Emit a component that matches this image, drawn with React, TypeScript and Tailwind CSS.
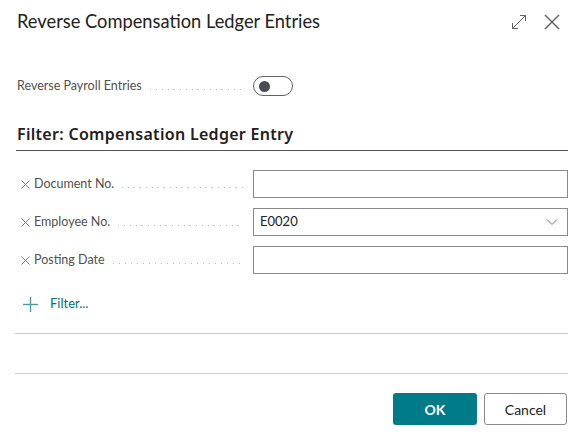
import React, { useState } from 'react'

const font = { fontFamily: '"Segoe UI", Lato, "Noto Sans", sans-serif' }
const headingFont = { fontFamily: '"Segoe UI", "Noto Sans", sans-serif' }

function Dots() {
  return (
    <div className="flex-1 ml-[8px] mr-[10px] h-[1px] translate-y-[3px] bg-repeat-x bg-[length:6px_1px] bg-[linear-gradient(to_right,#bdbdbd_1px,transparent_1px)]" />
  )
}

function ClearIcon() {
  return (
    <svg width="9" height="9" viewBox="0 0 9 9" fill="none" stroke="#707070" strokeWidth="0.9" className="ml-[4px] mr-[4px]">
      <path d="M0.5 0.5 L8.5 8.5" />
      <path d="M8.5 0.5 L0.5 8.5" />
    </svg>
  )
}

interface FilterRowProps {
  label: string
  value?: string
  dropdown?: boolean
}

function FilterRow({ label, value, dropdown }: FilterRowProps) {
  return (
    <div className="flex items-center h-[28px]">
      <div className="flex items-center w-[236px] text-[12.5px] text-[#505050]">
        <ClearIcon />
        <span className="whitespace-nowrap">{label}</span>
        <Dots />
      </div>
      <div className="flex-1 h-[28px] border border-[#8a8a8a] flex items-center pl-[6px] pr-[8px] text-[13px] text-[#212121]">
        <span className="flex-1">{value}</span>
        {dropdown && (
          <svg width="14" height="14" viewBox="0 0 14 14" fill="none">
            <path d="M2 4.5 L7 9.5 L12 4.5" stroke="#707070" strokeWidth="1" />
          </svg>
        )}
      </div>
    </div>
  )
}

export default function App() {
  const [on, setOn] = useState(false)

  return (
    <div className="w-[584px] h-[439px] bg-white flex flex-col" style={font}>
      {/* Header */}
      <div className="flex items-start justify-between pl-[17px] pr-[24px] pt-[8px]">
        <h1 className="text-[18.3px] font-normal text-[#212121] leading-[26px]">
          Reverse Compensation Ledger Entries
        </h1>
        <div className="flex items-center gap-[17px] pt-[6px]">
          <svg width="16" height="16" viewBox="0 0 16 16" fill="none" stroke="#616161" strokeWidth="1">
            <path d="M1.5 14.5 L14.5 1.5" />
            <path d="M9 1.5 H14.5 V7" />
            <path d="M1.5 9 V14.5 H7" />
          </svg>
          <svg width="16" height="16" viewBox="0 0 16 16" fill="none" stroke="#616161" strokeWidth="1.4">
            <path d="M1 1 L15 15" />
            <path d="M15 1 L1 15" />
          </svg>
        </div>
      </div>

      {/* Option */}
      <div className="flex items-center pl-[17px] pr-[16px] mt-[42px] h-[20px]">
        <div className="flex items-center w-[236px] text-[12.5px] text-[#505050]">
          <span className="whitespace-nowrap">Reverse Payroll Entries</span>
          <Dots />
        </div>
        <button
          onClick={() => setOn(s => !s)}
          className="w-[40px] h-[20px] rounded-full border border-[#616161] flex items-center px-[4px] bg-white"
        >
          <span className="w-[11px] h-[11px] rounded-full bg-[#4b4b55] ml-[1px]" />
        </button>
      </div>

      {/* Filter section */}
      <div className="pl-[16px] pr-[16px] mt-[27px]">
        <div
          className="text-[16px] font-semibold tracking-[0.3px] text-[#212121] leading-[22px] pl-[1px] pb-[5px] border-b border-[#505050]"
          style={headingFont}
        >
          Filter: Compensation Ledger Entry
        </div>
        <div className="flex flex-col gap-[10px] mt-[19px] pl-[1px]">
          <FilterRow label="Document No." />
          <FilterRow label="Employee No." value="E0020" dropdown />
          <FilterRow label="Posting Date" />
        </div>
        <div className="flex items-center gap-[12px] mt-[21px] pl-[7px] h-[18px] text-[13px] text-[#00707a]">
          <svg width="15" height="15" viewBox="0 0 15 15" fill="none" stroke="#4f9aa0" strokeWidth="1.4">
            <path d="M7.5 0 V15" />
            <path d="M0 7.5 H15" />
          </svg>
          <span>Filter...</span>
        </div>
        <div className="mt-[20px] border-b border-[#c8c8c8] -ml-[1px]" />
        <div className="mt-[39px] border-b border-[#d0d0d0] -ml-[1px]" />
      </div>

      {/* Footer */}
      <div className="flex justify-end gap-[7px] pr-[17px] mt-[19px]">
        <button className="w-[84px] h-[32px] rounded-[3px] bg-[#007c89] text-white text-[14px] font-bold">
          OK
        </button>
        <button className="w-[83px] h-[32px] rounded-[3px] border border-[#8a8a8a] bg-white text-[#212121] text-[14px]">
          Cancel
        </button>
      </div>
    </div>
  )
}
